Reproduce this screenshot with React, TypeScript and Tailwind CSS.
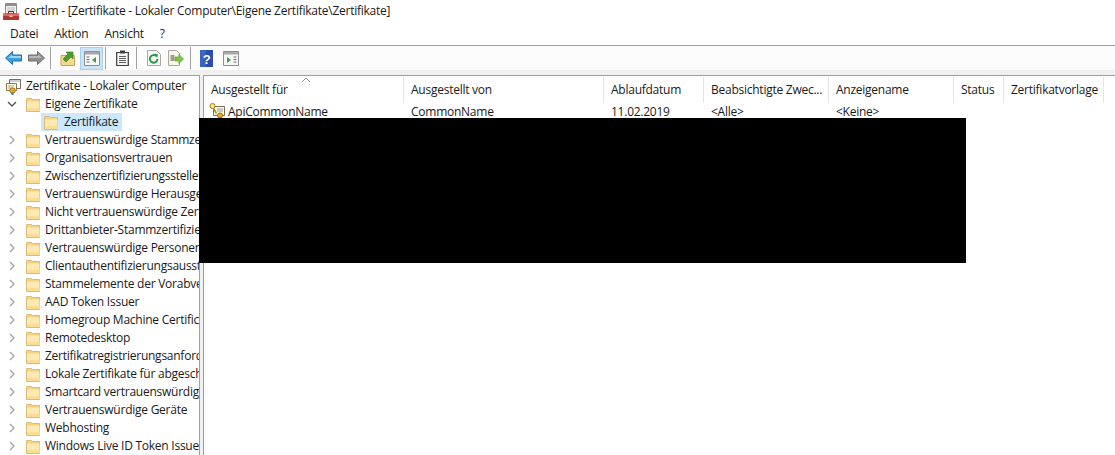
const FONT = "font-['Open_Sans','Noto_Sans',sans-serif]";

const treeItems = [
  "Vertrauenswürdige Stammzertifizierungsstellen",
  "Organisationsvertrauen",
  "Zwischenzertifizierungsstellen",
  "Vertrauenswürdige Herausgeber",
  "Nicht vertrauenswürdige Zertifikate",
  "Drittanbieter-Stammzertifizierungsstellen",
  "Vertrauenswürdige Personen",
  "Clientauthentifizierungsaussteller",
  "Stammelemente der Vorabversion",
  "AAD Token Issuer",
  "Homegroup Machine Certificates",
  "Remotedesktop",
  "Zertifikatregistrierungsanforderungen",
  "Lokale Zertifikate für abgeschirmte VMs",
  "Smartcard vertrauenswürdige Stämme",
  "Vertrauenswürdige Geräte",
  "Webhosting",
  "Windows Live ID Token Issuer",
];

const columns = [
  { label: "Ausgestellt für", width: "w-[200px]" },
  { label: "Ausgestellt von", width: "w-[200px]" },
  { label: "Ablaufdatum", width: "w-[100px]" },
  { label: "Beabsichtigte Zwec...", width: "w-[125px]" },
  { label: "Anzeigename", width: "w-[125px]" },
  { label: "Status", width: "w-[50px]" },
  { label: "Zertifikatvorlage", width: "w-[100px]" },
];

function Folder() {
  return (
    <svg width="16" height="15" viewBox="0 0 16 15" className="shrink-0">
      <path d="M1.500 2.500V1.500h5l1 1h7v12h-13z" fill="#f6d47e" stroke="#d8bb78" />
      <path d="M2 4.500h12.500v9.500H2z" fill="#fde9b4" />
      <path d="M2 11h12.500v3H2z" fill="#fbdd94" />
    </svg>
  );
}

function Chevron({ open }: { open?: boolean }) {
  return (
    <svg width="10" height="10" viewBox="0 0 10 10" className="shrink-0">
      <path
        d={open ? "M1 3l4 4 4-4" : "M3 1l4 4-4 4"}
        fill="none"
        stroke={open ? "#555" : "#a6a6a6"}
        strokeWidth="1.4"
      />
    </svg>
  );
}

function CertIcon() {
  return (
    <svg width="17" height="17" viewBox="0 0 17 17" className="shrink-0">
      <path d="M4.500 3.500h11v9h-11z" fill="#fdfbe9" stroke="#77704f" />
      <path d="M8 6h6M8 8h6" stroke="#9a9a9a" />
      <circle cx="3.500" cy="3" r="2.600" fill="#f7d566" stroke="#a8862a" />
      <circle cx="3.500" cy="3" r="0.800" fill="#fff" />
      <path d="M4.500 5.500l3 5" stroke="#a8862a" strokeWidth="1.500" />
      <circle cx="11" cy="12.500" r="2.600" fill="#e8a92e" stroke="#a3741a" />
      <path d="M9.500 14.500h3v2.500h-3z" fill="#3f6fb5" />
    </svg>
  );
}

function StoreIcon() {
  return (
    <svg width="16" height="17" viewBox="0 0 16 17" className="shrink-0">
      <path d="M4.500 1.500h11v9h-11z" fill="#fff" stroke="#6f6f6f" />
      <path d="M5 2h10v2H5z" fill="#cfcfcf" />
      <path d="M1.500 5.500h10v7h-10z" fill="#fdf6de" stroke="#8a7a4a" />
      <path d="M3 8h6M3 10h3" stroke="#b3a98a" />
      <circle cx="7.500" cy="12.500" r="2.700" fill="#e8a92e" stroke="#a3741a" />
      <path d="M6.500 14.500h2v2.500h-2z" fill="#3f6fb5" />
    </svg>
  );
}

function AppIcon() {
  return (
    <svg width="16" height="17" viewBox="0 0 16 17" className="shrink-0">
      <path d="M2.500 0.500h11v10h-11z" fill="#f4f4f4" stroke="#8b8b8b" />
      <path d="M3 1h10v2H3z" fill="#8f8f8f" />
      <path d="M4 5h8M4 7h8" stroke="#b5b5b5" />
      <path d="M5.500 8.500h5v2.500h-5z" fill="none" stroke="#6e2320" />
      <path d="M0 10.500h16V17H0z" fill="#b8342f" />
      <path d="M0 10.500h16v2.500H0z" fill="#de6a60" />
      <path d="M6.500 12.500h3V14h-3z" fill="#f3d7a0" />
    </svg>
  );
}

function ToolSeparator({ className }: { className: string }) {
  return <div className={`h-[22px] w-px bg-[#a0a0a0] shrink-0 ${className}`} />;
}

function Toolbar() {
  return (
    <div className="flex items-center h-[25px] pl-[5px] bg-[#fcfcfc] border-t border-[#a0a0a0]">
      {/* back */}
      <svg width="17" height="14" viewBox="0 0 17 14" className="shrink-0">
        <path d="M0.500 7L7.500 0.500V4H16.500V10H7.500V13.500z" fill="#3f9fe0" stroke="#1f70b0" />
        <path d="M3 7l4-3.500V5h9v2z" fill="#9bd6f7" />
      </svg>
      {/* forward */}
      <svg width="17" height="14" viewBox="0 0 17 14" className="shrink-0 ml-[6px]">
        <path d="M16.500 7L9.500 0.500V4H0.500V10H9.500V13.500z" fill="#8f8f8f" stroke="#6f6f6f" />
        <path d="M1 5h9V3.500L14 7H1z" fill="#b9b9b9" />
      </svg>
      <ToolSeparator className="ml-[5px]" />
      {/* up one level */}
      <svg width="16" height="16" viewBox="0 0 16 16" className="shrink-0 ml-[9px]">
        <path d="M1 5.500h13.500v10H1z" fill="#f6d98c" stroke="#c9a655" />
        <path d="M3 9l5-5-2-2h7v7l-2-2-5 5z" fill="#4d9a2f" stroke="#3a7a20" strokeWidth="0.6" />
      </svg>
      {/* show/hide tree, active */}
      <div className="flex items-center justify-center w-[23px] h-[23px] ml-[4px] bg-[#cce4f7] border border-[#a8d0ee] shrink-0">
        <svg width="16" height="15" viewBox="0 0 16 15">
          <path d="M0.500 0.500h15v14h-15z" fill="#f7f7f7" stroke="#8e8e8e" />
          <path d="M1 1h14v2.500H1z" fill="#a9a9a9" />
          <path d="M2.500 6h3M2.500 8.500h3M2.500 11h3" stroke="#6f6f6f" />
          <path d="M12 6v6L8 9z" fill="#3f9c3f" />
        </svg>
      </div>
      <ToolSeparator className="ml-[2px]" />
      {/* clipboard */}
      <svg width="13" height="16" viewBox="0 0 13 16" className="shrink-0 ml-[10px]">
        <path d="M0.700 2.500h11.600v13H0.700z" fill="#f4f4f4" stroke="#3c3c3c" strokeWidth="1.200" />
        <path d="M4 0.500h5v3H4z" fill="#3c3c3c" />
        <path d="M3 6.500h7M3 8.500h7M3 10.500h7M3 12.500h7" stroke="#5e5e5e" />
      </svg>
      <ToolSeparator className="ml-[7px]" />
      {/* refresh */}
      <svg width="14" height="16" viewBox="0 0 14 16" className="shrink-0 ml-[10px]">
        <path d="M0.500 0.500h9l4 4v11H0.500z" fill="#f9f9f9" stroke="#a8a8a8" />
        <path d="M10.500 9a3.800 3.800 0 1 1-1.300-3" fill="none" stroke="#2f9a45" strokeWidth="2" />
        <path d="M7.500 3.500l3.500 1-1 3.500z" fill="#2f9a45" />
      </svg>
      {/* export */}
      <svg width="16" height="16" viewBox="0 0 16 16" className="shrink-0 ml-[7px]">
        <path d="M0.500 0.500h8l3 3v12H0.500z" fill="#fbf7e3" stroke="#a8a8a8" />
        <path d="M2.500 6h4M2.500 8h4M2.500 10h4" stroke="#444" />
        <path d="M7 7h4V4.500L15.500 9 11 13.500V11H7z" fill="#7fc34a" stroke="#4f9a28" strokeWidth="0.600" />
      </svg>
      <ToolSeparator className="ml-[6px]" />
      {/* help */}
      <svg width="13" height="17" viewBox="0 0 13 17" className="shrink-0 ml-[9px]">
        <path d="M0 0h13v17H0z" fill="#2b4fa8" />
        <path d="M0 0h6v17H0z" fill="#3a63c4" />
        <text x="6.500" y="13.500" textAnchor="middle" fontSize="13" fontWeight="700" fill="#fff" fontFamily="Liberation Sans, sans-serif">?</text>
      </svg>
      {/* action pane */}
      <svg width="16" height="15" viewBox="0 0 16 15" className="shrink-0 ml-[10px]">
        <path d="M0.500 0.500h15v14h-15z" fill="#f7f7f7" stroke="#8e8e8e" />
        <path d="M1 1h14v2.500H1z" fill="#a9a9a9" />
        <path d="M10.500 6h3M10.500 8.500h3M10.500 11h3" stroke="#6f6f6f" />
        <path d="M4 6v6l4-3z" fill="#3f9c3f" />
      </svg>
    </div>
  );
}

function TreeRow({ children, className = "" }: { children: React.ReactNode; className?: string }) {
  return <div className={`flex items-center h-[18px] whitespace-nowrap ${className}`}>{children}</div>;
}

function Tree() {
  return (
    <aside className="w-[200px] shrink-0 border-t border-r border-[#a0a0a0] bg-white overflow-hidden pl-[5px] h-full">
      <TreeRow className="mt-[1px]">
        <StoreIcon />
        <span className="ml-[5px]">Zertifikate - Lokaler Computer</span>
      </TreeRow>
      <TreeRow className="pl-[2px]">
        <Chevron open />
        <span className="ml-[8px] flex items-center">
          <Folder />
        </span>
        <span className="ml-[4px]">Eigene Zertifikate</span>
      </TreeRow>
      <TreeRow className="pl-[36px]">
        <div className="flex items-center h-[18px] bg-[#cce8ff] pl-[2px] pr-[4px]">
          <Folder />
          <span className="ml-[5px]">Zertifikate</span>
        </div>
      </TreeRow>
      {treeItems.map((item) => (
        <TreeRow key={item} className="pl-[2px]">
          <Chevron />
          <span className="ml-[8px] flex items-center">
            <Folder />
          </span>
          <span className="ml-[4px]">{item}</span>
        </TreeRow>
      ))}
    </aside>
  );
}

function CertTable() {
  return (
    <main className="flex-1 ml-[3px] border-t border-l border-[#a0a0a0] bg-white h-full overflow-hidden">
      <div className="relative flex h-[27px] pt-[1px]">
        <svg width="10" height="6" viewBox="0 0 10 6" className="absolute left-[97px] top-[1px]">
          <path d="M1 5l4-4 4 4" fill="none" stroke="#9a9a9a" />
        </svg>
        {columns.map((col) => (
          <div
            key={col.label}
            className={`${col.width} shrink-0 flex items-center pl-[7px] border-r border-[#e5e5e5] whitespace-nowrap overflow-hidden`}
          >
            {col.label}
          </div>
        ))}
      </div>
      <div className="flex items-center h-[17px]">
        <div className="w-[200px] shrink-0 flex items-center pl-[5px]">
          <CertIcon />
          <span className="ml-[2px]">ApiCommonName</span>
        </div>
        <div className="w-[200px] shrink-0 pl-[7px]">CommonName</div>
        <div className="w-[100px] shrink-0 pl-[7px]">11.02.2019</div>
        <div className="w-[125px] shrink-0 pl-[7px]">&lt;Alle&gt;</div>
        <div className="w-[125px] shrink-0 pl-[7px]">&lt;Keine&gt;</div>
      </div>
    </main>
  );
}

export default function App() {
  return (
    <div className={`${FONT} relative w-[1115px] h-[455px] overflow-hidden bg-[#f0f0f0] text-[12px] leading-[16px] tracking-[-0.25px] text-[#1a1a1a]`}>
      {/* title bar */}
      <div className="flex items-center h-[22px] bg-white pl-[3px]">
        <AppIcon />
        <span className="ml-[5px]">certlm - [Zertifikate - Lokaler Computer\Eigene Zertifikate\Zertifikate]</span>
      </div>
      {/* menu */}
      <div className="flex items-center h-[23px] bg-white pl-[10px] gap-[16px]">
        <span>Datei</span>
        <span>Aktion</span>
        <span>Ansicht</span>
        <span>?</span>
      </div>
      <Toolbar />
      <div className="flex h-[380px] mt-[5px]">
        <Tree />
        <CertTable />
      </div>
      {/* redacted area */}
      <div className="absolute left-[199px] top-[118px] w-[767px] h-[145px] bg-black" />
    </div>
  );
}
